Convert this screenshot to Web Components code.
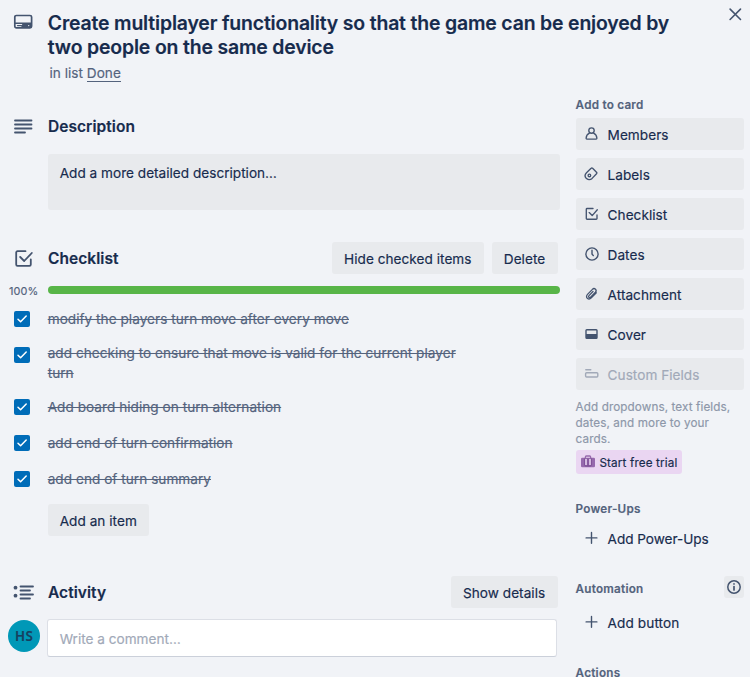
<!DOCTYPE html>
<html lang="en">
<head>
<meta charset="utf-8">
<title>Card details</title>
<style>
html,body{margin:0;height:677px;overflow:hidden;background:#f1f3f7}
body{font:400 13.6px/20px Inter,"Liberation Sans",sans-serif;letter-spacing:.035px;color:#172b4d;-webkit-text-stroke:.17px currentColor;
--subtle:#54637d;--icon:#44546f;--btn:#e8eaed}
</style>
</head>
<body>
<card-dialog></card-dialog>
<script>
const define=(name,css,html)=>customElements.define(name,class extends HTMLElement{
  connectedCallback(){
    if(this.shadowRoot)return;
    const markup=typeof html==='function'?html(this):html;
    this.attachShadow({mode:'open'}).innerHTML=`<style>*{box-sizing:border-box}${css}</style>${markup}`;
  }
});

const icons={
  card:[20,20,'<rect x="1.800" y="3.500" width="16.800" height="12.300" rx="1.600"/><path d="M2 11.200h16" stroke-width="1.400"/><path d="M9.500 11.500H18V15.500H8z" fill="currentColor" stroke="none"/><path d="M4.500 13.600h4" stroke-width="1.300"/><circle cx="15.700" cy="13.600" r=".7" fill="#f1f3f7" stroke="none"/>',1.7],
  lines:[20,20,'<path d="M2 3.500h16.500M2 7.500h16.500M2 11.500h16.500M2 15.500h10"/>',1.8],
  check:[20,20,'<path d="M12.500 2.200H4.500A1.300 1.300 0 0 0 3.200 3.500v12A1.300 1.300 0 0 0 4.500 16.800h12a1.300 1.300 0 0 0 1.300-1.300v-5"/><path d="M7.200 8l4 4L18.800 4"/>',1.8],
  activity:[22,20,'<path d="M7.500 3.500h12.500M7.500 7.500h9.500M7.500 11.500h12.500M7.500 15.500h9.500"/><circle cx="2.500" cy="4.700" r="1.900" fill="currentColor" stroke="none"/><circle cx="2.500" cy="12.700" r="1.900" fill="currentColor" stroke="none"/>',1.8],
  member:[16,16,'<circle cx="7.500" cy="4.500" r="2.700"/><path d="M5.400 7.100C3.300 8.100 2.200 9.800 2.100 12.300q0 .8.800.8h9.200q.8 0 .8-.8c-.1-2.500-1.200-4.200-3.300-5.200"/>',1.35],
  label:[16,16,'<path d="M7.100 2.300q.7-.7 1.500 0l3.900 3.900q.7.8 0 1.600l-4.400 4.600C6 14.400 3.600 13.800 2.200 12.300.8 10.700.8 8.400 2.500 6.700z"/><circle cx="5.400" cy="9.400" r="1.300"/>',1.35],
  todo:[16,16,'<path d="M9 2.500H3.100a.8.800 0 0 0-.8.800v9.100a.8.800 0 0 0 .8.800h9.100a.8.800 0 0 0 .8-.8V9"/><path d="M5.200 6.600l3 3L13.300 3.800"/>',1.35],
  clock:[16,16,'<circle cx="8" cy="8" r="6.100"/><path d="M8 4.200V8l1.300 1.600"/>',1.4],
  clip:[16,16,'<path d="M12.300 6.700l-5 5.200c-1.200 1.300-2.900 1.400-4 .4s-1-2.700.2-3.900l4.900-5c.9-1 2.200-1 3.100-.2.900.9.800 2.100-.1 3.100l-4.800 4.900c-.5.500-1.200.6-1.700.1s-.4-1.200.1-1.700L9 5.500"/>',1.3],
  cover:[16,16,'<rect x="2" y="3.700" width="11" height="8.600" rx=".8"/><path d="M2 8h11v4.300H2z" fill="currentColor" stroke="none"/>',1.4],
  field:[16,16,'<path d="M1.800 3.700h5"/><rect x="1.600" y="6.700" width="12.200" height="4.300" rx="1"/>',1.4],
  plus:[16,16,'<path d="M7.500 2.500v10.800M2.100 7.900h10.800"/>',1.4],
  info:[16,16,'<circle cx="8" cy="8" r="6.200"/><path d="M8 7.600v3.400" stroke-width="1.700"/><path d="M8 4.900v.1" stroke-width="1.700"/>',1.5],
  close:[16,16,'<path d="M3.100 3.100l10.400 10.400M13.500 3.100L3.100 13.500"/>',1.6],
  tick:[16,16,'<path d="M4 8.200l2.600 2.600L12.200 5"/>',1.5],
  trial:[16,16,'<path d="M5.400 4V2.900q0-.9.900-.9h3.400q.9 0 .9.900V4" stroke-width="1.300"/><rect x="1" y="3.800" width="14" height="9.500" rx="1.300" fill="currentColor" stroke="none"/><path d="M5.900 5v6M10.100 5v6" stroke="#ead6f2" stroke-width="1.700" stroke-linecap="butt"/><path d="M4.700 4.800v6.200q0 1 1 1h4.600q1 0 1-1V4.800M8 4.800v6.700" stroke="#75488d" stroke-width=".8"/>',1.2]
};
define('ui-icon',':host{display:inline-flex;flex:none}svg{display:block;fill:none;stroke:currentColor;stroke-linecap:round;stroke-linejoin:round}',el=>{
  const [w,h,d,s]=icons[el.getAttribute('name')];
  return `<svg width="${w}" height="${h}" viewBox="0 0 ${w} ${h}" stroke-width="${s}">${d}</svg>`;
});

define('ui-button',':host{display:inline-flex;height:32px;padding:1px 12.2px 0 11.700px;align-items:center;border-radius:3px;background:var(--btn);white-space:nowrap;box-sizing:border-box}','<slot></slot>');

define('side-button',`:host{display:flex;height:32px;padding:0 8px;gap:7.600px;align-items:center;border-radius:3px;background:var(--btn);box-sizing:border-box}
:host([plain]){background:none}:host([disabled]){color:#a1a9b8}
ui-icon{color:var(--icon)}:host([disabled]) ui-icon{color:inherit}span{padding-top:2px}`,
  el=>`<ui-icon name="${el.getAttribute('icon')}"></ui-icon><span><slot></slot></span>`);

define('side-title',':host{display:flex;align-items:center;justify-content:space-between;height:20px;font-weight:600;font-size:11.7px;letter-spacing:.24px;color:var(--subtle)}','<slot></slot>');

define('section-head',`:host{display:grid;grid-template-columns:40px 1fr auto;height:32px;align-items:center;padding-right:2px}
ui-icon{color:var(--icon);padding:1px 0 0 5px}h3{margin:0;padding-top:1px;font:600 15.5px/21px Inter,"Liberation Sans",sans-serif;letter-spacing:.05px}
.actions{display:flex;gap:8px}::slotted(ui-button){padding-right:12.800px}`,
  el=>`<ui-icon name="${el.getAttribute('icon')}"></ui-icon><h3>${el.getAttribute('label')}</h3><div class="actions"><slot></slot></div>`);

define('check-item',`:host{display:grid;grid-template-columns:33.700px 420px;align-items:center;padding-left:6px}
.box{width:16px;height:16px;border-radius:2px;background:#006cb8;color:#fff}
.text{padding:8px 0;color:var(--subtle);text-decoration:line-through}
:host([long]) .text{padding:6px 0}:host([long]){align-items:start}:host([long]) .box{margin-top:10px}`,
  '<div class="box"><ui-icon name="tick"></ui-icon></div><div class="text"><slot></slot></div>');

define('progress-row',`:host{display:grid;grid-template-columns:39px 1fr;align-items:center;height:20px;line-height:18px;font-size:10.9px;letter-spacing:.1px;color:var(--subtle)}
span{padding:1px 0 0 1px}.bar{height:8px;border-radius:4px;background:#58b548;margin-left:1px}`,'<span>100%</span><div class="bar"></div>');

define('comment-row',`:host{display:flex;gap:7px;padding-top:11px}
.avatar{width:32px;height:32px;margin-top:1px;border-radius:50%;background:#0098b7;color:#173f5f;display:grid;place-items:center;font:600 13.4px/32px "Noto Sans",sans-serif;letter-spacing:.3px}
.field{width:510px;height:38px;padding:1px 12px 0 11.700px;border:1px solid #dcdfe6;border-bottom-color:#cbd0da;border-radius:3px;background:#fff;display:flex;align-items:center;color:#a1a9b8;letter-spacing:0}`,
  '<div class="avatar">HS</div><div class="field">Write a comment…</div>');

define('card-main',`:host{display:block;width:552px}
.title{display:grid;grid-template-columns:39.800px 1fr;width:700px;padding-top:11px}
.title ui-icon{padding:1px 0 0 5px;color:var(--icon)}
h2{margin:0;font:600 19.4px/24px Inter,"Liberation Sans",sans-serif;letter-spacing:-.153px}
.list{margin:4px 0 27px 41.500px;color:var(--subtle);letter-spacing:.02px}
.list a{display:inline-block;line-height:16px;border-bottom:1px solid}
.desc{height:56px;margin:12px 0 32px 40px;padding:9px 11.700px;background:var(--btn);border-radius:3px;letter-spacing:.01px}
progress-row{margin:6px 0 1px}.add{margin:7px 0 40px 40px;display:flex}`,
`<div class="title"><ui-icon name="card"></ui-icon><h2>Create multiplayer functionality so that the game can be enjoyed by<br>two people on the same device</h2></div>
<div class="list">in list <a>Done</a></div>
<section-head icon="lines" label="Description"></section-head>
<div class="desc">Add a more detailed description…</div>
<section-head icon="check" label="Checklist"><ui-button style="padding-right:12.6px">Hide checked items</ui-button><ui-button>Delete</ui-button></section-head>
<progress-row></progress-row>
<check-item>modify the players turn move after every move</check-item>
<check-item long>add checking to ensure that move is valid for the current player turn</check-item>
<check-item>Add board hiding on turn alternation</check-item>
<check-item>add end of turn confirmation</check-item>
<check-item>add end of turn summary</check-item>
<div class="add"><ui-button>Add an item</ui-button></div>
<section-head icon="activity" label="Activity"><ui-button>Show details</ui-button></section-head>
<comment-row></comment-row>`);

define('card-sidebar',`:host{display:block;width:168px;padding-top:95px}
side-title{margin-left:-.4px}
.buttons{display:grid;gap:8px;margin-top:3px}
.note{margin:9px 0 0 -.4px;font-size:11.7px;line-height:16px;letter-spacing:.1px;color:#8d97a9}
.trial{display:inline-flex;align-items:center;gap:3.400px;height:24px;margin-top:3px;padding:0 4.400px 0 4px;border-radius:3px;background:#ead6f2;font-size:11.7px;letter-spacing:.15px}
.trial ui-icon{color:#9669ad}.trial span{padding-top:1px}
.power{margin-top:24px}.power+side-button{margin-top:3px;letter-spacing:-.04px}
.auto{margin-top:22px;height:22px}.auto+side-button{margin-top:8px;letter-spacing:.1px}
.info{display:grid;place-items:center;width:20px;height:22px;border-radius:3px;background:var(--btn);color:var(--icon)}
.auto b{font-weight:600;padding-top:3px}.end{margin-top:25px}`,
`<side-title>Add to card</side-title>
<div class="buttons">
<side-button icon="member">Members</side-button><side-button icon="label">Labels</side-button>
<side-button icon="todo">Checklist</side-button><side-button icon="clock">Dates</side-button>
<side-button icon="clip">Attachment</side-button><side-button icon="cover">Cover</side-button>
<side-button icon="field" disabled>Custom Fields</side-button></div>
<div class="note">Add dropdowns, text fields,<br>dates, and more to your<br>cards.</div>
<div class="trial"><ui-icon name="trial"></ui-icon><span>Start free trial</span></div>
<side-title class="power">Power-Ups</side-title><side-button icon="plus" plain>Add Power-Ups</side-button>
<side-title class="auto"><b>Automation</b><div class="info"><ui-icon name="info"></ui-icon></div></side-title>
<side-button icon="plus" plain>Add button</side-button>
<side-title class="end">Actions</side-title>`);

define('card-dialog',`:host{display:grid;grid-template-columns:552px 168px;gap:16px;padding:0 6px 0 8px;height:677px;overflow:hidden;position:relative;box-sizing:border-box}
.close{position:absolute;top:6px;right:7px;color:var(--icon)}`,
'<card-main></card-main><card-sidebar></card-sidebar><ui-icon class="close" name="close"></ui-icon>');
</script>
</body>
</html>
